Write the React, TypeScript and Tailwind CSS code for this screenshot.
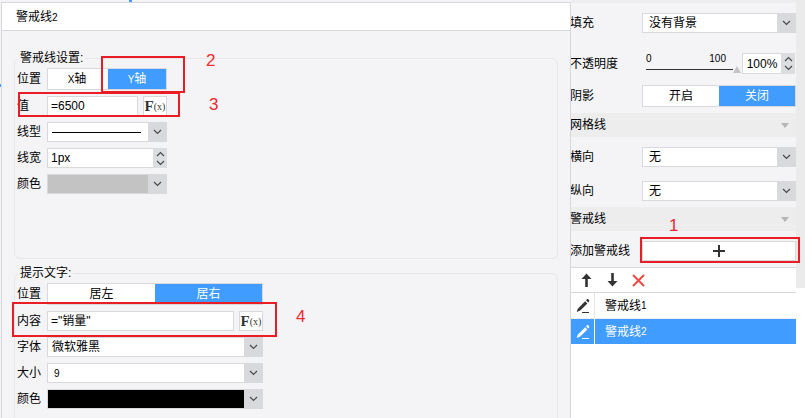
import { ReactNode } from 'react';

const Chevron = ({ up }: { up?: boolean }) => (
  <svg width="9" height="6" viewBox="0 0 9 6" fill="none" className={up ? 'rotate-180' : ''}>
    <path d="M1 1l3.5 3.5L8 1" stroke="#4a4a4a" strokeWidth="1.2" />
  </svg>
);

const Field = ({ label, children }: { label: string; children: ReactNode }) => (
  <div className="flex min-h-5 items-center mb-[6px]">
    <span className="w-[30px] shrink-0 text-black">{label}</span>
    {children}
  </div>
);

const Select = ({ w, fill, children }: { w: string; fill?: string; children?: ReactNode }) => (
  <div className={`flex h-5 border border-[#d9d9dd] bg-white ${w}`}>
    <div className={`flex-1 min-w-0 flex items-center pl-1 ${fill ?? ''}`}>{children}</div>
    <div className="w-[19px] -my-px -mr-px bg-[#d8d9dd] flex items-center justify-center">
      <Chevron />
    </div>
  </div>
);

const Stepper = () => (
  <div className="w-[14px] -my-px -mr-px bg-[#dcdde0] flex flex-col items-center justify-center gap-[3px]">
    <Chevron up />
    <Chevron />
  </div>
);

const Fx = () => (
  <div className="ml-[5px] w-6 h-5 border border-[#d9d9dd] bg-white flex items-center justify-center font-['Liberation_Serif',serif] text-[#333]">
    <span className="text-[15px] font-bold leading-none">F</span>
    <span className="text-[10px] leading-none mt-[2px]">(x)</span>
  </div>
);

const Segment = ({ w, left, right, gap }: { w: string; left: ReactNode; right: ReactNode; gap?: boolean }) => (
  <div className={`flex h-[22px] border border-[#d9d9dd] bg-[#f4f4f6] ${w}`}>
    <div className="flex-1 bg-white flex items-center justify-center">{left}</div>
    <div className={`flex-1 bg-[#409cff] text-white flex items-center justify-center ${gap ? 'ml-[2px]' : ''}`}>{right}</div>
  </div>
);

const Small = ({ children }: { children: ReactNode }) => <span className="text-[10px]">{children}</span>;

const SectionHeader = ({ title }: { title: string }) => (
  <div className="h-6 bg-[#ededed] flex items-center justify-between pr-[7px]">
    <span className="-ml-px">{title}</span>
    <div className="w-0 h-0 border-x-[4px] border-x-transparent border-t-[5px] border-t-[#b5b5b5]" />
  </div>
);

const RightRow = ({ label, className, children }: { label: string; className: string; children: ReactNode }) => (
  <div className={`flex items-center min-h-5 ${className}`}>
    <span className="w-[72px] -ml-px shrink-0 whitespace-nowrap">{label}</span>
    {children}
  </div>
);

const Pencil = ({ color }: { color: string }) => (
  <svg width="15" height="15" viewBox="0 0 15 15">
    <path d="M10.2 3.2l2.2 2.2-7.2 7.2-3.6 1.4 1.4-3.6z" fill={color} />
    <path d="M11 2.2l.9-.9c.4-.4.9-.4 1.3 0l.9.9c.4.4.4.9 0 1.3l-.9.9z" fill={color} />
    <path d="M7 14.5h7" stroke={color} strokeWidth="1" />
  </svg>
);

const Arrow = ({ down }: { down?: boolean }) => (
  <svg width="11" height="14" viewBox="0 0 11 14" className={down ? 'rotate-180' : ''}>
    <path d="M5.5 0.5l5 5.5H6.8v8H4.2V6H0.5z" fill="#333" />
  </svg>
);

const Mark = ({ className }: { className: string }) => (
  <div className={`absolute border-2 border-[#ea1c24] ${className}`} />
);

const Num = ({ className, children }: { className: string; children: ReactNode }) => (
  <span className={`absolute text-[17px] leading-none text-[#ea2a30] font-['Liberation_Sans',sans-serif] ${className}`}>{children}</span>
);

export default function App() {
  return (
    <div className="relative flex w-[805px] h-[418px] overflow-hidden bg-[#f4f4f6] text-[12px] text-black font-['Liberation_Sans','Noto_Sans_CJK_SC',sans-serif]">
      {/* 왼쪽 대화상자 */}
      <div className="ml-px mt-[2px] w-[570px] shrink-0 border-x border-t border-[#d8d8dc] flex flex-col">
        <div className="h-7 shrink-0 bg-white border-b border-[#d8d8dc] flex items-center pl-[14px]">
          <span>警戒线<Small>2</Small></span>
        </div>
        <div className="pl-3 pr-3 pt-[19px]">
          <fieldset className="h-[209px] border border-[#e6e6ea] rounded-md pl-[2px] pt-[2px]">
            <legend className="ml-px px-[2px] h-4 leading-4">警戒线设置:</legend>
            <Field label="位置">
              <Segment w="w-[120px]" gap left={<span><Small>X</Small>轴</span>} right={<span><Small>Y</Small>轴</span>} />
            </Field>
            <Field label="值">
              <div className="w-[91px] h-5 border border-[#d9d9dd] bg-white flex items-center pl-[3px]">=6500</div>
              <Fx />
            </Field>
            <Field label="线型">
              <Select w="w-[120px]">
                <div className="w-[89px] h-px bg-black" />
              </Select>
            </Field>
            <Field label="线宽">
              <div className="flex w-[120px] h-5 border border-[#d9d9dd] bg-white">
                <div className="flex-1 flex items-center pl-[3px]">1px</div>
                <Stepper />
              </div>
            </Field>
            <Field label="颜色">
              <Select w="w-[120px]" fill="!pl-0 bg-[#c3c3c3]" />
            </Field>
          </fieldset>
          <fieldset className="mt-[6px] h-[170px] border border-[#e6e6ea] rounded-md pl-[2px] pt-[2px]">
            <legend className="ml-px px-[2px] h-4 leading-4">提示文字:</legend>
            <Field label="位置">
              <Segment w="w-[216px]" left="居左" right="居右" />
            </Field>
            <Field label="内容">
              <div className="w-[187px] h-5 border border-[#d9d9dd] bg-white flex items-center pl-[3px]">="销量"</div>
              <Fx />
            </Field>
            <Field label="字体">
              <Select w="w-[216px]">微软雅黑</Select>
            </Field>
            <Field label="大小">
              <Select w="w-[216px]"><span className="text-[10px] pl-[2px]">9</span></Select>
            </Field>
            <Field label="颜色">
              <Select w="w-[216px]" fill="!pl-0 bg-black" />
            </Field>
          </fieldset>
        </div>
      </div>

      {/* 오른쪽 속성 패널 */}
      <div className="w-[225px] shrink-0 flex flex-col overflow-hidden">
        <div className="h-[3px] shrink-0 bg-[#ededed]" />
        <RightRow label="填充" className="mt-[10px]">
          <Select w="w-[154px]"><span className="pl-[2px]">没有背景</span></Select>
        </RightRow>
        <div className="mt-5 flex items-center h-[21px]">
          <span className="w-[72px] -ml-px shrink-0 whitespace-nowrap">不透明度</span>
          <div className="w-[100px] shrink-0 pl-[4px]">
            <div className="flex justify-between w-[80px] text-[10px] leading-none">
              <span>0</span>
              <span>100</span>
            </div>
            <div className="flex items-center mt-[2px]">
              <div className="w-[87px] h-[1px] bg-[#333]" />
              <div className="w-0 h-0 border-x-[4px] border-x-transparent border-b-[7px] border-b-[#c4c4c4]" />
            </div>
          </div>
          <div className="flex w-[53px] h-[21px] border border-[#d9d9dd] bg-white">
            <div className="flex-1 flex items-center justify-center">100%</div>
            <Stepper />
          </div>
        </div>
        <RightRow label="阴影" className="mt-[11px]">
          <Segment w="w-[154px]" left="开启" right="关闭" />
        </RightRow>
        <div className="mt-[6px]"><SectionHeader title="网格线" /></div>
        <RightRow label="横向" className="mt-[10px]">
          <Select w="w-[154px]"><span className="pl-[2px]">无</span></Select>
        </RightRow>
        <RightRow label="纵向" className="mt-[14px]">
          <Select w="w-[154px]"><span className="pl-[2px]">无</span></Select>
        </RightRow>
        <div className="mt-[6px]"><SectionHeader title="警戒线" /></div>
        <RightRow label="添加警戒线" className="mt-[10px]">
          <div className="w-[154px] h-5 border border-[#d9d9dd] bg-white flex items-center justify-center">
            <svg width="12" height="12" viewBox="0 0 12 12">
              <path d="M6 0v12M0 6h12" stroke="#333" strokeWidth="2" />
            </svg>
          </div>
        </RightRow>
        <div className="mt-[6px] flex-1 bg-white border-t border-[#d8d8dc]">
          <div className="h-[25px] flex items-center border-b border-[#d8d8dc] pl-[10px] gap-[15px]">
            <Arrow />
            <Arrow down />
            <svg width="13" height="13" viewBox="0 0 13 13" className="-ml-px">
              <path d="M1 1l11 11M12 1L1 12" stroke="#ee4b43" strokeWidth="2" />
            </svg>
          </div>
          <div className="h-[26px] flex border-b border-[#ededed]">
            <div className="w-[24px] flex items-center justify-center border-r border-[#e4e4e4]">
              <Pencil color="#333" />
            </div>
            <div className="flex items-center pl-[10px]">警戒线<Small>1</Small></div>
          </div>
          <div className="h-[25px] flex bg-[#409cff] text-white">
            <div className="w-[24px] flex items-center justify-center border-r border-white">
              <Pencil color="#fff" />
            </div>
            <div className="flex items-center pl-[10px]">警戒线<Small>2</Small></div>
          </div>
        </div>
      </div>

      {/* 스크롤바 */}
      <div className="flex-1 bg-white">
        <div className="h-[288px] bg-[#ebebeb]" />
      </div>

      {/* 빨간 주석 */}
      <Mark className="left-[101px] top-[56px] w-[84px] h-[37px]" />
      <Mark className="left-[18px] top-[92px] w-[162px] h-[25px]" />
      <Mark className="left-[12px] top-[302px] w-[265px] h-[35px]" />
      <Mark className="left-[640px] top-[237px] w-[160px] h-[26px]" />
      <Num className="left-[206px] top-[52px]">2</Num>
      <Num className="left-[209px] top-[96px]">3</Num>
      <Num className="left-[296px] top-[308px]">4</Num>
      <Num className="left-[669px] top-[217px]">1</Num>
      <div className="absolute left-[129px] top-0 w-[3px] h-[2px] bg-[#409cff]" />
      <div className="absolute left-0 top-[84px] w-px h-[3px] bg-[#409cff]" />
    </div>
  );
}
